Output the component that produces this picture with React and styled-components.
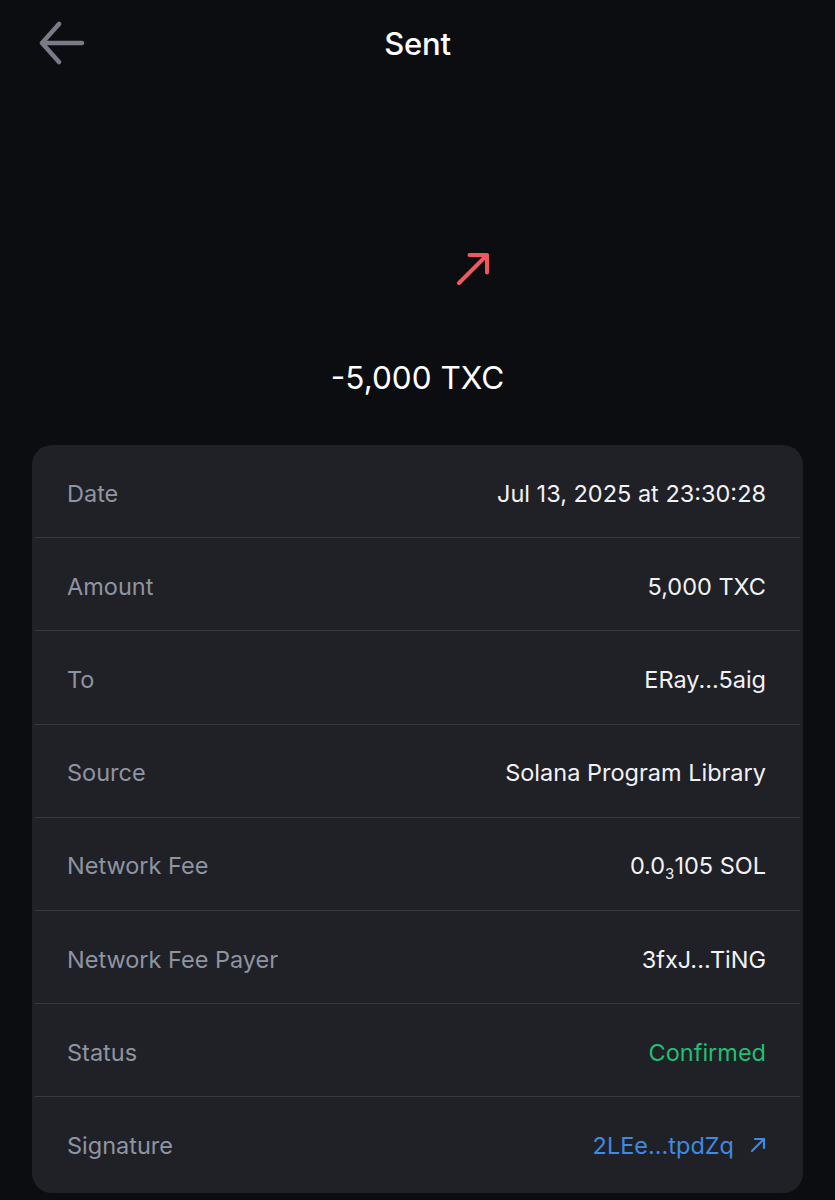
import React from "react";
import styled, { createGlobalStyle } from "styled-components";

const GlobalStyle = createGlobalStyle`
  html, body {
    margin: 0;
    padding: 0;
    background: #0c0d11;
  }
  body {
    font-family: Inter, "Noto Sans", "Liberation Sans", sans-serif;
    -webkit-font-smoothing: antialiased;
  }
`;

//styles
const Page = styled.div`
  width: 835px;
  min-height: 1200px;
  background: #0c0d11;
  color: #f2f2f4;
  display: flex;
  flex-direction: column;
`;
const Header = styled.header`
  height: 86px;
  display: grid;
  grid-template-columns: 100px 1fr 100px;
  align-items: center;
`;
const BackButton = styled.button`
  background: none;
  border: 0;
  padding: 0 0 0 38px;
  display: flex;
  align-items: center;
  cursor: pointer;
`;
const Title = styled.h1`
  margin: 0;
  text-align: center;
  font-size: 31px;
  font-weight: 500;
  letter-spacing: -0.2px;
  color: #ffffff;
`;
const IconRow = styled.div`
  margin-top: 166px;
  display: flex;
  justify-content: center;
`;
const DirectionIcon = styled.svg`
  margin-left: 111px;
  display: block;
`;
const Amount = styled.div`
  margin-top: 73px;
  text-align: center;
  font-size: 31.5px;
  line-height: 38px;
  font-weight: 400;
  color: #ffffff;
`;
const Card = styled.section`
  margin: 48px 32px 0;
  padding: 0 3px;
  background: #202126;
  border-radius: 20px;
`;
const Row = styled.div`
  box-sizing: border-box;
  height: 93.2px;
  padding: 4px 34px 0 32px;
  display: flex;
  align-items: center;
  justify-content: space-between;
  border-bottom: 1px solid #393a40;
  font-size: 23.5px;
  &:last-child {
    border-bottom: 0;
    height: 96px;
    padding-top: 0;
  }
`;
const Label = styled.span`
  color: #8f94a2;
`;
const Value = styled.span`
  color: ${(props) => props.$color || "#f2f2f4"};
  display: flex;
  align-items: center;
  gap: 16px;
  sub {
    font-size: 15px;
    vertical-align: -5px;
    line-height: 0;
  }
`;

const rows = [
  { label: "Date", value: "Jul 13, 2025 at 23:30:28" },
  { label: "Amount", value: "5,000 TXC" },
  { label: "To", value: "ERay...5aig" },
  { label: "Source", value: "Solana Program Library" },
  {
    label: "Network Fee",
    value: (
      <>
        0.0<sub>3</sub>105 SOL
      </>
    ),
  },
  { label: "Network Fee Payer", value: "3fxJ...TiNG" },
  { label: "Status", value: "Confirmed", color: "#20bf74" },
  { label: "Signature", value: "2LEe...tpdZq", color: "#3f8ae2", link: true },
];

const App = () => {
  return (
    <Page>
      <GlobalStyle />
      <Header>
        <BackButton aria-label="Back">
          <svg width="48" height="44" viewBox="0 0 48 44" fill="none">
            <path
              d="M21 3 L4 22 L21 41 M4 22 H44"
              stroke="#7a7b88"
              strokeWidth="4.5"
              strokeLinecap="round"
              strokeLinejoin="round"
            />
          </svg>
        </BackButton>
        <Title>Sent</Title>
        <div />
      </Header>
      <IconRow>
        <DirectionIcon width="34" height="34" viewBox="0 0 34 34" fill="none">
          <path
            d="M3 31 L31 3 M13.5 3 H31 V20.5"
            stroke="#f2575b"
            strokeWidth="4"
            strokeLinecap="round"
            strokeLinejoin="round"
          />
        </DirectionIcon>
      </IconRow>
      <Amount>-5,000 TXC</Amount>
      <Card>
        {rows.map((row) => (
          <Row key={row.label}>
            <Label>{row.label}</Label>
            <Value $color={row.color}>
              <span>{row.value}</span>
              {row.link && (
                <svg width="16" height="16" viewBox="0 0 16 16" fill="none">
                  <path
                    d="M2 14 L14 2 M5 2 H14 V11"
                    stroke="#3f8ae2"
                    strokeWidth="2.2"
                    strokeLinecap="round"
                    strokeLinejoin="round"
                  />
                </svg>
              )}
            </Value>
          </Row>
        ))}
      </Card>
    </Page>
  );
};

export default App;
